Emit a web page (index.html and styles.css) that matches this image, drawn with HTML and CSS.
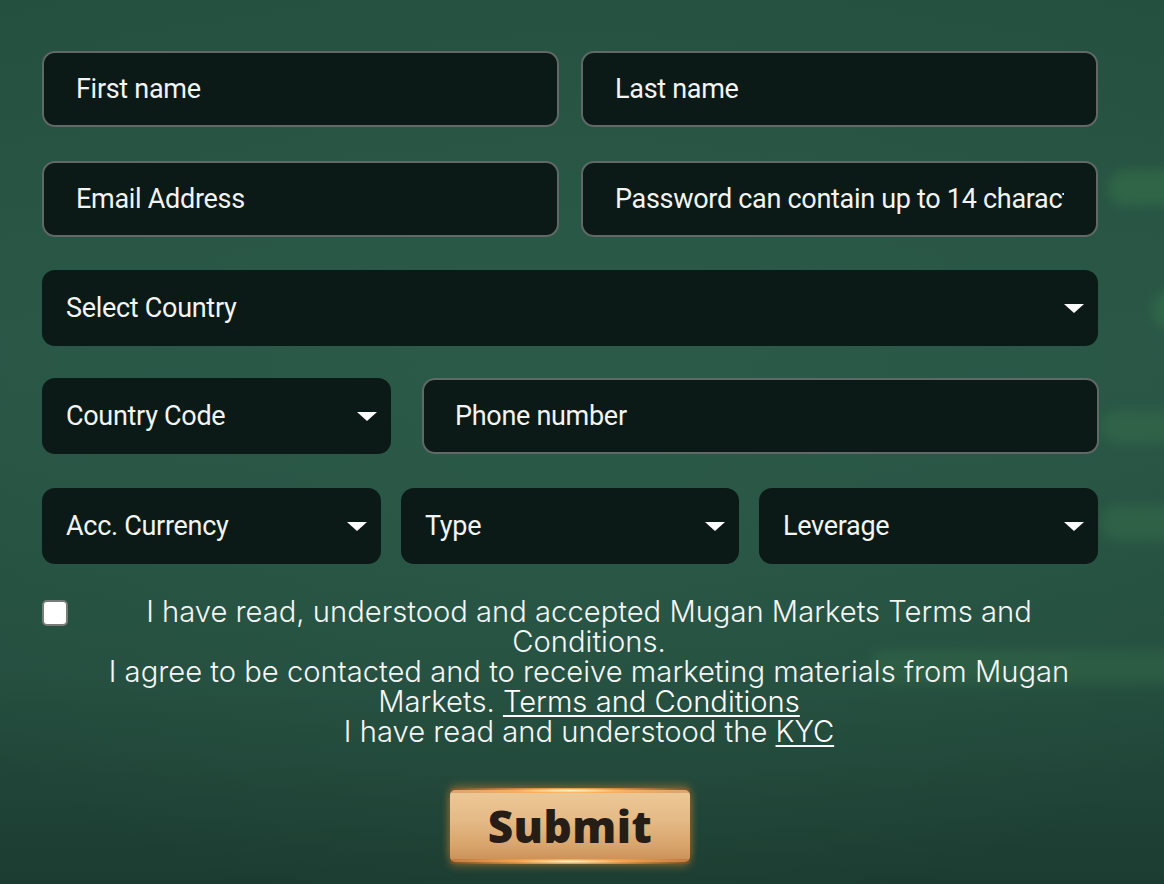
FILE: index.html
```html
<!DOCTYPE html>
<html lang="en">
<head>
<meta charset="utf-8">
<title>Register</title>
<link rel="stylesheet" href="styles.css">
</head>
<body>
<div class="page">
  <div class="glow g1"></div>
  <div class="glow g2"></div>
  <div class="glow g3"></div>
  <div class="glow g4"></div>
  <div class="glow g5"></div>
  <form class="form">
    <div class="row two r1">
      <div class="field bordered"><span class="ph">First name</span></div>
      <div class="field bordered"><span class="ph">Last name</span></div>
    </div>
    <div class="row two r2">
      <div class="field bordered"><span class="ph">Email Address</span></div>
      <div class="field bordered"><span class="ph clip">Password can contain up to 14 characters</span></div>
    </div>
    <div class="row one">
      <div class="field select"><span class="ph">Select Country</span><span class="caret"></span></div>
    </div>
    <div class="row phone">
      <div class="field select"><span class="ph">Country Code</span><span class="caret"></span></div>
      <div class="field bordered"><span class="ph">Phone number</span></div>
    </div>
    <div class="row three">
      <div class="field select"><span class="ph">Acc. Currency</span><span class="caret"></span></div>
      <div class="field select"><span class="ph">Type</span><span class="caret"></span></div>
      <div class="field select"><span class="ph">Leverage</span><span class="caret"></span></div>
    </div>
    <div class="agree">
      <span class="check"></span>
      <p class="terms">
        I have read, understood and accepted Mugan Markets Terms and<br>Conditions.<br>
        I agree to be contacted and to receive marketing materials from Mugan<br>Markets. <a href="#">Terms and Conditions</a><br>
        I have read and understood the <a href="#">KYC</a>
      </p>
    </div>
    <div class="actions">
      <button type="button" class="submit">Submit</button>
    </div>
  </form>
</div>
</body>
</html>
```
FILE: styles.css
```css
* { box-sizing: border-box; }
html, body { margin: 0; padding: 0; }
body {
  width: 1164px;
  height: 884px;
  overflow: hidden;
  background:
    radial-gradient(ellipse 70% 60% at 50% 45%, rgba(46, 94, 76, 0.55) 0%, rgba(46, 94, 76, 0) 100%),
    linear-gradient(180deg, #24503f 0%, #295646 40%, #254f40 75%, #1c3c31 100%);
  font-family: "Roboto", "Liberation Sans", sans-serif;
}
.page {
  position: relative;
  width: 1164px;
  height: 884px;
  padding: 51px 0 0 42px;
}
.glow {
  position: absolute;
  border-radius: 30px;
  background: #3b7a4c;
  filter: blur(6px);
  opacity: 0.45;
}
.g1 { left: 1108px; top: 170px; width: 80px; height: 36px; }
.g2 { left: 1152px; top: 292px; width: 30px; height: 36px; border-radius: 50%; }
.g3 { left: 1100px; top: 410px; width: 80px; height: 34px; opacity: 0.35; }
.g4 { left: 1100px; top: 505px; width: 80px; height: 36px; opacity: 0.35; }
.g5 { left: 870px; top: 650px; width: 320px; height: 34px; opacity: 0.3; }

.form {
  position: relative;
  width: 1056px;
  margin: 0;
}
.row {
  display: grid;
  height: 76px;
  margin-bottom: 33px;
}
.row.two { grid-template-columns: 1fr 1fr; column-gap: 22px; }
.row.r1 { margin-bottom: 34px; }
.row.one { grid-template-columns: 1fr; margin-bottom: 32px; }
.row.phone { grid-template-columns: 349px 677px; column-gap: 31px; margin-bottom: 34px; }
.row.three { grid-template-columns: 339px 338px 339px; column-gap: 20px; margin-bottom: 36px; }

.field {
  display: flex;
  align-items: center;
  background: #0b1a16;
  border-radius: 13px;
  color: #f2f4f3;
  font-size: 27px;
  letter-spacing: -0.3px;
  overflow: hidden;
}
.field.bordered {
  border: 2px solid #626865;
  padding: 0 32px;
}
.field.select {
  padding: 0 14px 0 24px;
  justify-content: space-between;
}
.row.phone .field.bordered { padding-left: 31px; }
.ph { white-space: nowrap; }
.ph.clip { overflow: hidden; width: 452px; }
.caret {
  width: 0;
  height: 0;
  border-left: 10px solid transparent;
  border-right: 10px solid transparent;
  border-top: 9px solid #ffffff;
  flex: none;
}

.agree {
  display: flex;
  align-items: flex-start;
  gap: 12px;
}
.check {
  flex: none;
  width: 26px;
  height: 26px;
  background: #ffffff;
  border: 2px solid #777c79;
  border-radius: 5px;
}
.terms {
  flex: 1;
  margin: -3px 0 0;
  text-align: center;
  color: #f4f6f5;
  font-family: "Inter", "Liberation Sans", sans-serif;
  font-size: 29.2px;
  font-weight: 300;
  line-height: 30px;
}
.terms a { color: #ffffff; text-decoration: underline; text-underline-offset: 3px; text-decoration-thickness: 2px; }

.actions {
  display: flex;
  justify-content: center;
  margin-top: 43px;
}
.submit {
  position: relative;
  width: 240px;
  height: 72px;
  border: none;
  border-radius: 5px;
  background: linear-gradient(180deg, #edc998 0%, #e5bb87 40%, #d9a66d 75%, #c98f55 100%);
  box-shadow: 0 -4px 8px rgba(255, 150, 50, 0.4), 0 4px 8px rgba(255, 150, 50, 0.4), 0 0 2px rgba(0,0,0,0.5);
  color: #261d16;
  font-family: "Open Sans", "Lato", sans-serif;
  font-weight: 800;
  font-size: 44px;
  letter-spacing: 0.5px;
  padding: 0;
  cursor: pointer;
}
.submit::before,
.submit::after {
  content: "";
  position: absolute;
  left: 0;
  right: 0;
  height: 5px;
  background: radial-gradient(ellipse 50% 100% at 50% 50%, rgba(255, 244, 200, 1) 0%, rgba(255, 170, 80, 0.8) 45%, rgba(180, 80, 20, 0.3) 100%);
  border-radius: 3px;
}
.submit::before { top: -2px; }
.submit::after { bottom: -2px; }
```
